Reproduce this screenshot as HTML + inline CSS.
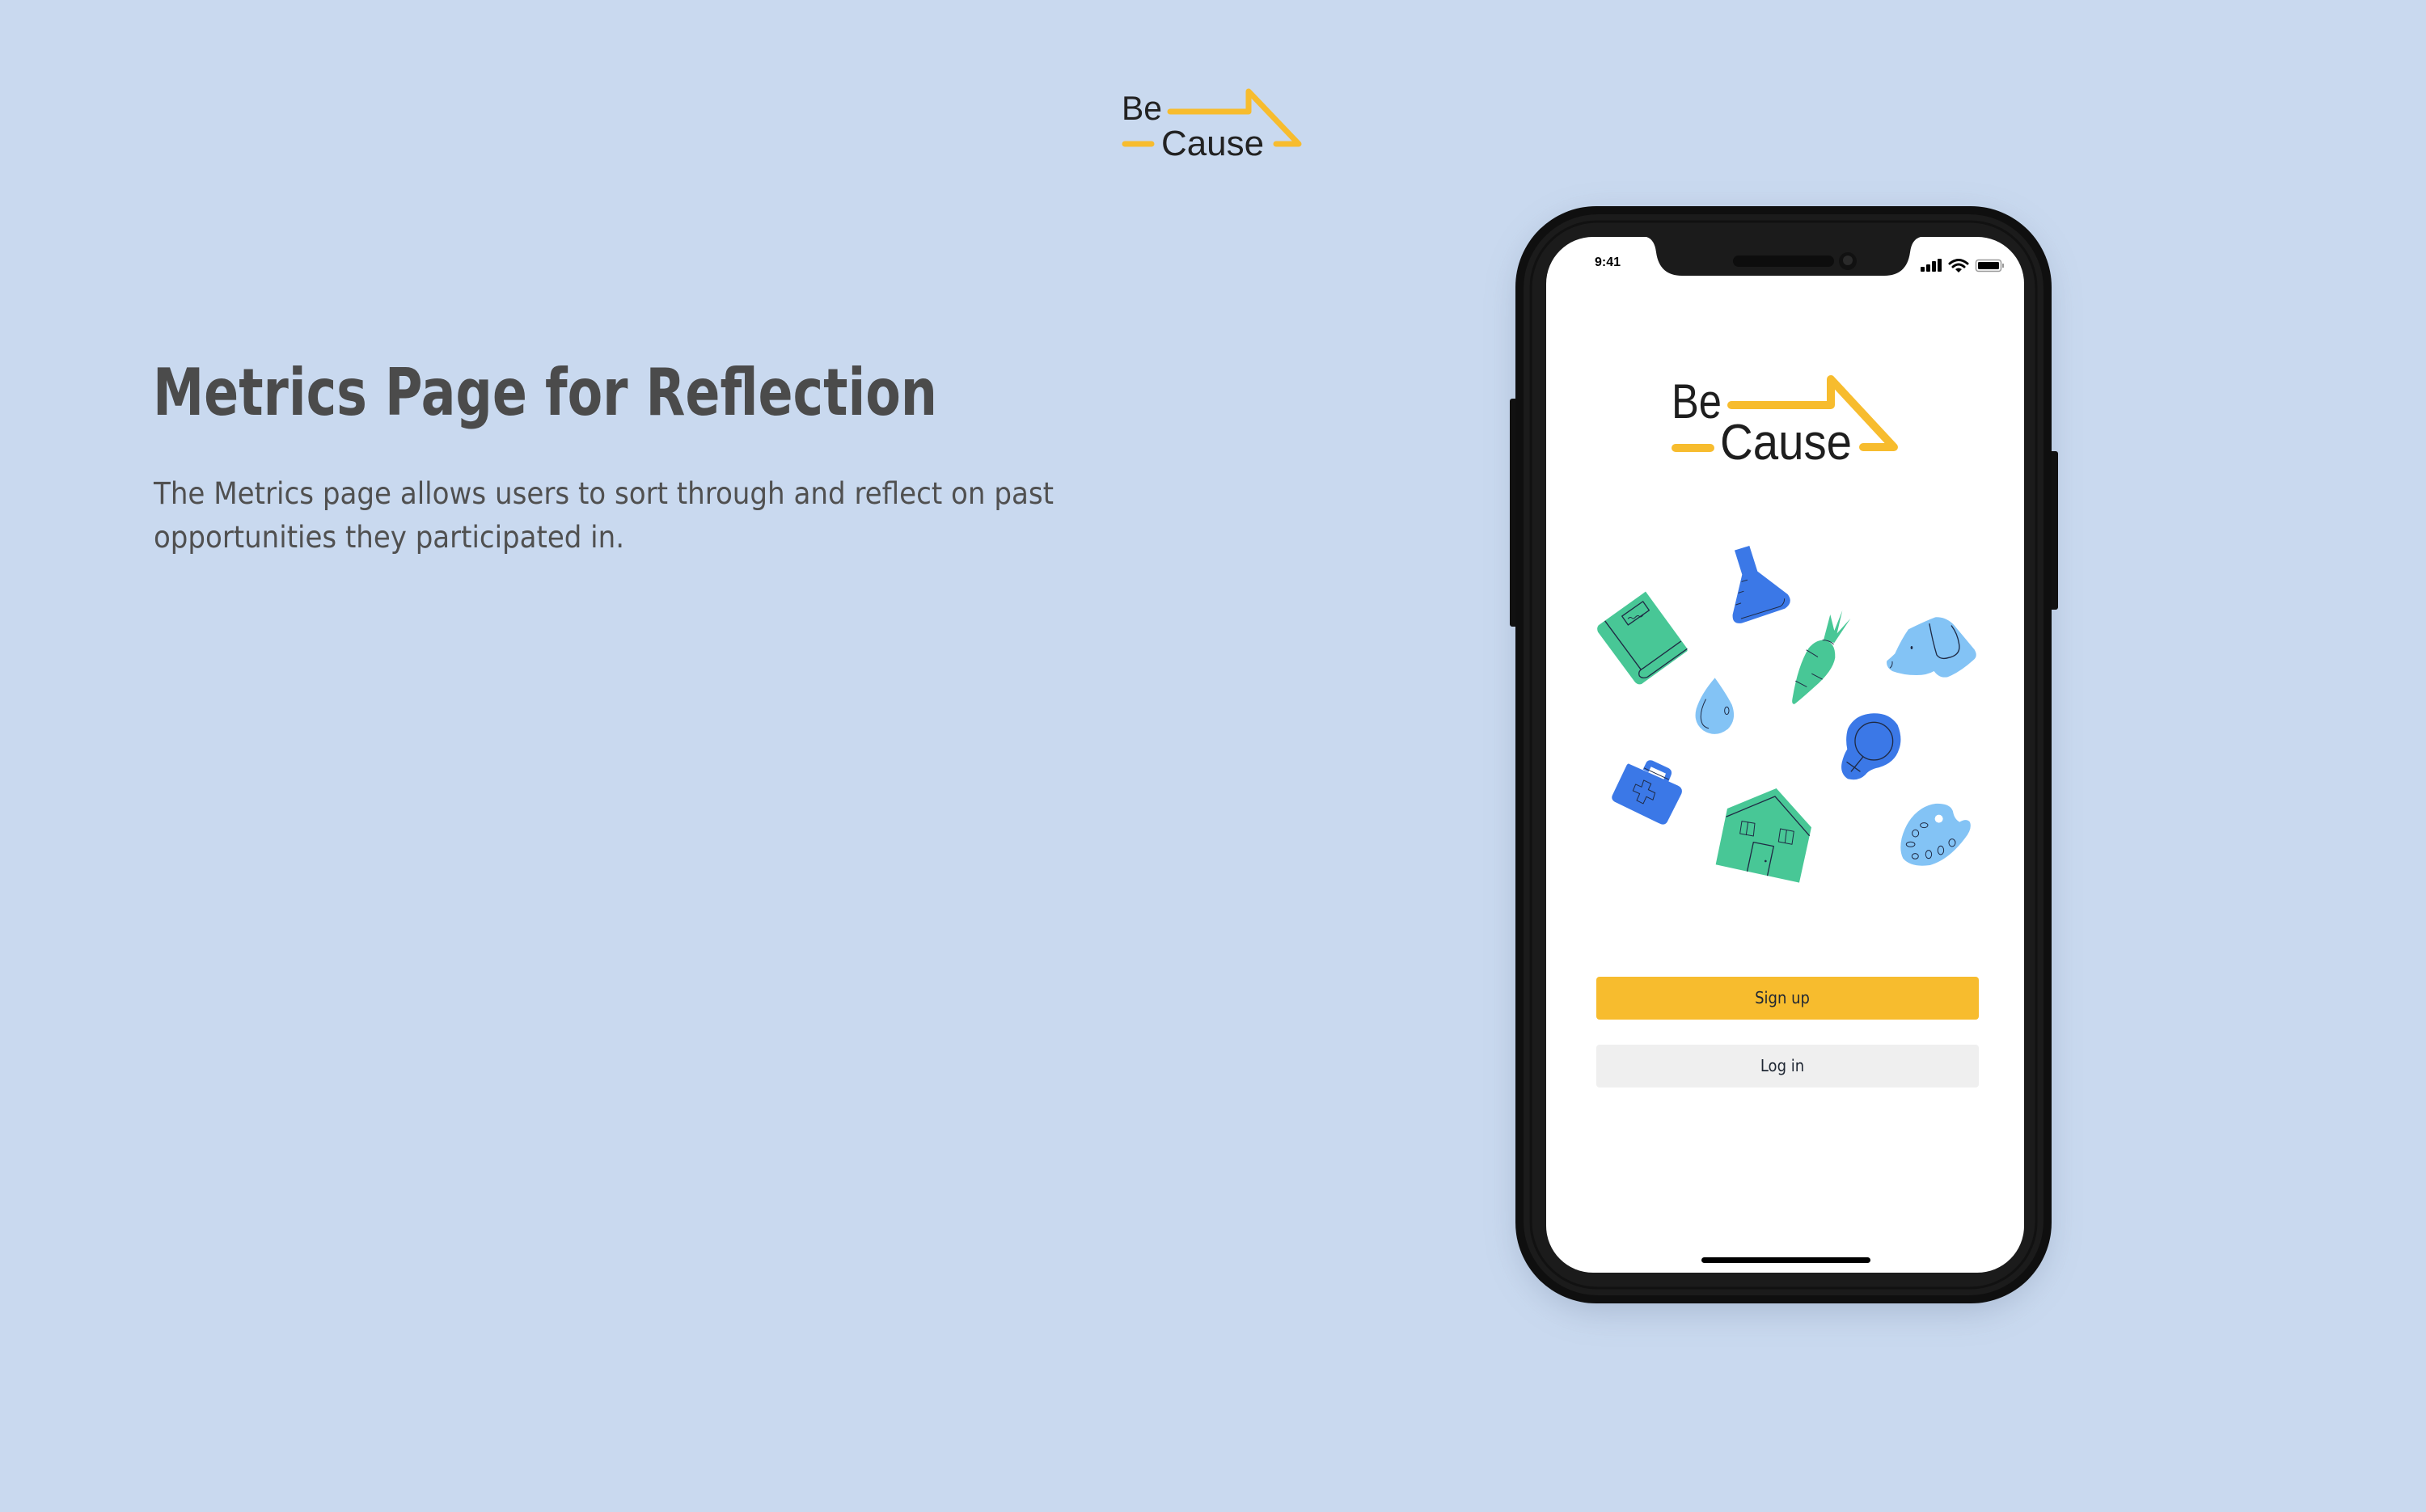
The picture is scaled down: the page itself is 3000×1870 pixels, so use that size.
<!DOCTYPE html>
<html><head><meta charset="utf-8"><style>
html,body{margin:0;padding:0;}
body{width:3000px;height:1870px;background:#C9D9EF;position:relative;overflow:hidden;font-family:"Liberation Sans",sans-serif;}
</style></head><body>
<svg width="3000" height="1870" viewBox="0 0 3000 1870" style="position:absolute;left:0;top:0">
<defs>
<filter id="sh" x="-20%" y="-20%" width="140%" height="140%"><feGaussianBlur stdDeviation="22"/></filter>
</defs>
<!-- top logo -->
<g font-family="Liberation Sans, DejaVu Sans, sans-serif" fill="#222">
<text x="1387" y="148" font-size="42" font-weight="500" textLength="50" lengthAdjust="spacingAndGlyphs">Be</text>
<text x="1436" y="192" font-size="44" textLength="127" lengthAdjust="spacingAndGlyphs">Cause</text>
</g>
<g stroke="#F7BC2E" stroke-width="7" fill="none" stroke-linecap="round" stroke-linejoin="round">
<path d="M1447,138 L1544,138 L1544,113 L1606,178 L1578,178"/>
<path d="M1391,178 L1424,178"/>
</g>
<!-- title -->
<text x="189" y="513" font-size="80" font-weight="bold" fill="#4B4B4B" font-family="DejaVu Sans Condensed, DejaVu Sans, sans-serif" textLength="970" lengthAdjust="spacingAndGlyphs">Metrics Page for Reflection</text>
<text x="190" y="623" font-size="37" fill="#505050" font-family="DejaVu Sans Condensed, DejaVu Sans, sans-serif" textLength="1113" lengthAdjust="spacingAndGlyphs">The Metrics page allows users to sort through and reflect on past</text>
<text x="190" y="677" font-size="37" fill="#505050" font-family="DejaVu Sans Condensed, DejaVu Sans, sans-serif" textLength="582" lengthAdjust="spacingAndGlyphs">opportunities they participated in.</text>

<!-- phone -->
<rect x="1880" y="270" width="650" height="1350" rx="100" fill="#6a7a95" opacity="0.35" filter="url(#sh)"/>
<rect x="1867" y="493" width="10" height="282" rx="3" fill="#111"/>
<rect x="2534" y="558" width="11" height="196" rx="3" fill="#111"/>
<rect x="1874" y="255" width="663" height="1357" rx="100" fill="#0f0f0f"/>
<rect x="1884" y="265" width="643" height="1337" rx="92" fill="#1b1b1b"/>
<rect x="1893" y="274" width="625" height="1319" rx="82" fill="none" stroke="#111" stroke-width="3"/>
<rect x="1912" y="293" width="591" height="1281" rx="58" fill="#fff"/>
<!-- notch -->
<path d="M2036,293 L2375,293 Q2364,296 2362,312 Q2358,341 2330,341 L2080,341 Q2052,341 2048,312 Q2046,296 2036,293 Z" fill="#1b1b1b"/>
<rect x="2143" y="316" width="125" height="14" rx="7" fill="#0d0d0d"/>
<circle cx="2285" cy="323" r="11" fill="#111"/>
<circle cx="2285" cy="322" r="6" fill="#2a2a2a"/>
<!-- status -->
<text x="1972" y="329" font-size="16" font-weight="bold" fill="#000" font-family="Liberation Sans, sans-serif">9:41</text>
<g fill="#000">
<rect x="2375" y="330" width="5" height="6" rx="1"/>
<rect x="2382" y="327" width="5" height="9" rx="1"/>
<rect x="2389" y="323" width="5" height="13" rx="1"/>
<rect x="2396" y="320" width="5" height="16" rx="1"/>
</g>
<g fill="none" stroke="#000" stroke-width="3" stroke-linecap="round">
<path d="M2411,326 Q2422,317 2433,326"/>
<path d="M2415,330 Q2422,324 2429,330"/>
</g>
<path d="M2418,333 L2422,337 L2426,333 Q2422,330 2418,333Z" fill="#000"/>
<rect x="2443.5" y="321.5" width="31" height="14" rx="3" fill="none" stroke="#999" stroke-width="1.5"/>
<rect x="2446" y="324" width="26" height="9" rx="1.5" fill="#000"/>
<rect x="2476" y="326" width="2" height="5" fill="#999"/>

<!-- inner logo -->
<g font-family="Liberation Sans, DejaVu Sans, sans-serif" fill="#1e1e1e">
<text x="2067" y="517" font-size="60" font-weight="500" textLength="62" lengthAdjust="spacingAndGlyphs">Be</text>
<text x="2127" y="568" font-size="62" textLength="163" lengthAdjust="spacingAndGlyphs">Cause</text>
</g>
<g stroke="#F7BC2E" stroke-width="10" fill="none" stroke-linecap="round" stroke-linejoin="round">
<path d="M2141,501 L2264,501 L2264,469 L2342,553 L2304,553"/>
<path d="M2072,554 L2115,554"/>
</g>

<!-- icons -->
<g transform="translate(1950,650) scale(0.3333)" stroke="#1f2a44" stroke-width="4" stroke-linecap="round" stroke-linejoin="round">
<!-- book -->
<path d="M80,370 L255,245 L408,455 L410,465 L240,588 Q225,592 215,580 L78,395 Q72,380 80,370 Z" fill="#48C796" stroke="none"/>
<path d="M105,355 L238,535 M385,430 L245,530 Q225,540 232,558 Q242,570 262,562 L408,458" fill="none"/>
<rect x="170" y="305" width="95" height="40" transform="rotate(-35 218 325)" fill="none"/>
<path d="M190,345 q8,-8 14,-2 q6,6 14,-4 q8,-8 14,-2 q6,6 14,-6" fill="none" stroke-width="3"/>
<!-- flask -->
<path d="M585,92 L640,75 L670,170 L782,255 Q805,285 772,308 L612,362 Q575,368 578,330 L613,182 Z" fill="#3B78E7" stroke="none"/>
<path d="M610,345 L755,300 Q770,290 770,272 M612,208 L632,202 M600,250 L618,244 M590,294 L608,288" fill="none" stroke-width="3"/>
<!-- carrot -->
<path d="M915,425 Q960,430 958,490 Q950,540 880,600 Q830,645 808,662 Q795,665 800,640 Q820,520 860,455 Q885,425 915,425 Z" fill="#48C796" stroke="none"/>
<path d="M915,425 L940,330 L955,390 L985,315 L965,400 L1015,345 L955,435 Z" fill="#48C796" stroke="none"/>
<path d="M912,425 Q935,425 952,440 M852,462 L893,487 M872,550 L910,570 M812,577 L852,598" fill="none" stroke-width="3"/>
<!-- dog -->
<path d="M1230,385 Q1290,355 1330,340 Q1370,338 1400,370 L1475,460 Q1490,485 1470,500 Q1420,545 1375,562 Q1345,568 1325,540 Q1300,555 1260,555 Q1210,555 1170,540 Q1145,525 1150,502 Q1165,490 1180,475 Q1205,420 1230,385 Z" fill="#83C3F5" stroke="none"/>
<path d="M1308,365 Q1320,430 1335,480 Q1350,500 1380,490 Q1425,480 1418,440 Q1412,400 1390,372" fill="none" stroke-width="4"/>
<ellipse cx="1242" cy="453" rx="4" ry="6" fill="#1f2a44" stroke="none"/>
<path d="M1170,505 Q1172,520 1162,528" fill="none" stroke-width="3"/>
<!-- drop -->
<path d="M512,565 Q555,625 575,665 Q595,720 560,755 Q515,790 468,760 Q430,730 443,680 Q460,625 512,565 Z" fill="#83C3F5" stroke="none"/>
<path d="M478,645 Q450,700 465,735 Q472,748 488,752" fill="none" stroke-width="3"/>
<ellipse cx="556" cy="687" rx="8" ry="14" fill="none" stroke-width="3"/>
<!-- venus -->
<path d="M1100,697 Q1160,695 1190,740 Q1210,790 1195,830 Q1180,880 1120,898 Q1085,905 1070,925 Q1045,950 1005,940 Q975,920 983,880 Q990,850 1003,830 Q995,790 1005,755 Q1030,700 1100,697 Z" fill="#3B78E7" stroke="none"/>
<circle cx="1102" cy="800" r="70" fill="none" stroke-width="4"/>
<path d="M1062,858 L1018,912 M1002,878 L1050,912" fill="none" stroke-width="4"/>
<!-- medkit -->
<path d="M195,885 L375,965 Q395,975 388,995 L335,1100 Q325,1115 305,1105 L140,1025 Q125,1015 132,1000 L182,895 Q188,880 195,885 Z" fill="#3B78E7" stroke="none"/>
<path d="M245,905 L258,878 Q265,868 280,872 L340,900 Q355,908 350,925 L340,950 L322,942 L330,920 L275,895 L265,915 Z" fill="#3B78E7" stroke="none"/>
<path d="M250,900 L340,942" fill="none" stroke-width="3"/>
<path d="M248,945 L275,958 L265,980 L290,992 L282,1018 L258,1006 L246,1032 L222,1020 L233,995 L208,984 L218,960 L240,970 Z" fill="none" stroke-width="3"/>
<!-- house -->
<path d="M558,1050 L740,975 L870,1120 L825,1325 L515,1258 Z" fill="#48C796" stroke="none"/>
<path d="M555,1080 L735,1005 L862,1150" fill="none" stroke-width="4"/>
<path d="M632,1282 L655,1175 L730,1190 L707,1298" fill="none" stroke-width="4"/>
<circle cx="700" cy="1245" r="4" fill="#1f2a44" stroke="none"/>
<path d="M612,1097 L660,1105 L655,1152 L605,1143 Z M635,1100 L628,1148" fill="none" stroke-width="3"/>
<path d="M755,1125 L805,1135 L798,1183 L748,1173 Z M778,1130 L772,1178" fill="none" stroke-width="3"/>
<!-- palette -->
<path d="M1330,1032 Q1385,1030 1395,1060 Q1400,1090 1420,1100 Q1445,1085 1458,1100 Q1468,1125 1440,1160 Q1380,1240 1310,1260 Q1240,1270 1210,1235 Q1195,1205 1205,1160 Q1225,1085 1280,1050 Q1305,1035 1330,1032 Z" fill="#83C3F5" stroke="none"/>
<circle cx="1343" cy="1088" r="15" fill="#fff" stroke="none"/>
<g fill="none" stroke-width="3">
<ellipse cx="1288" cy="1112" rx="14" ry="9"/>
<ellipse cx="1256" cy="1142" rx="12" ry="13"/>
<ellipse cx="1238" cy="1183" rx="16" ry="9"/>
<ellipse cx="1255" cy="1227" rx="12" ry="10"/>
<ellipse cx="1305" cy="1220" rx="11" ry="15"/>
<ellipse cx="1350" cy="1205" rx="11" ry="16"/>
<ellipse cx="1392" cy="1177" rx="12" ry="14"/>
</g>
</g>

<!-- buttons -->
<rect x="1974" y="1208" width="473" height="53" rx="4" fill="#F7BC2E"/>
<text x="2204" y="1241" font-size="20" text-anchor="middle" fill="#1f2733" font-family="DejaVu Sans Condensed, Liberation Sans, sans-serif">Sign up</text>
<rect x="1974" y="1292" width="473" height="53" rx="4" fill="#EFEFEF"/>
<text x="2204" y="1325" font-size="20" text-anchor="middle" fill="#1f2733" font-family="DejaVu Sans Condensed, Liberation Sans, sans-serif">Log in</text>
<rect x="2104" y="1555" width="209" height="7" rx="3.5" fill="#000"/>
</svg>
</body></html>
